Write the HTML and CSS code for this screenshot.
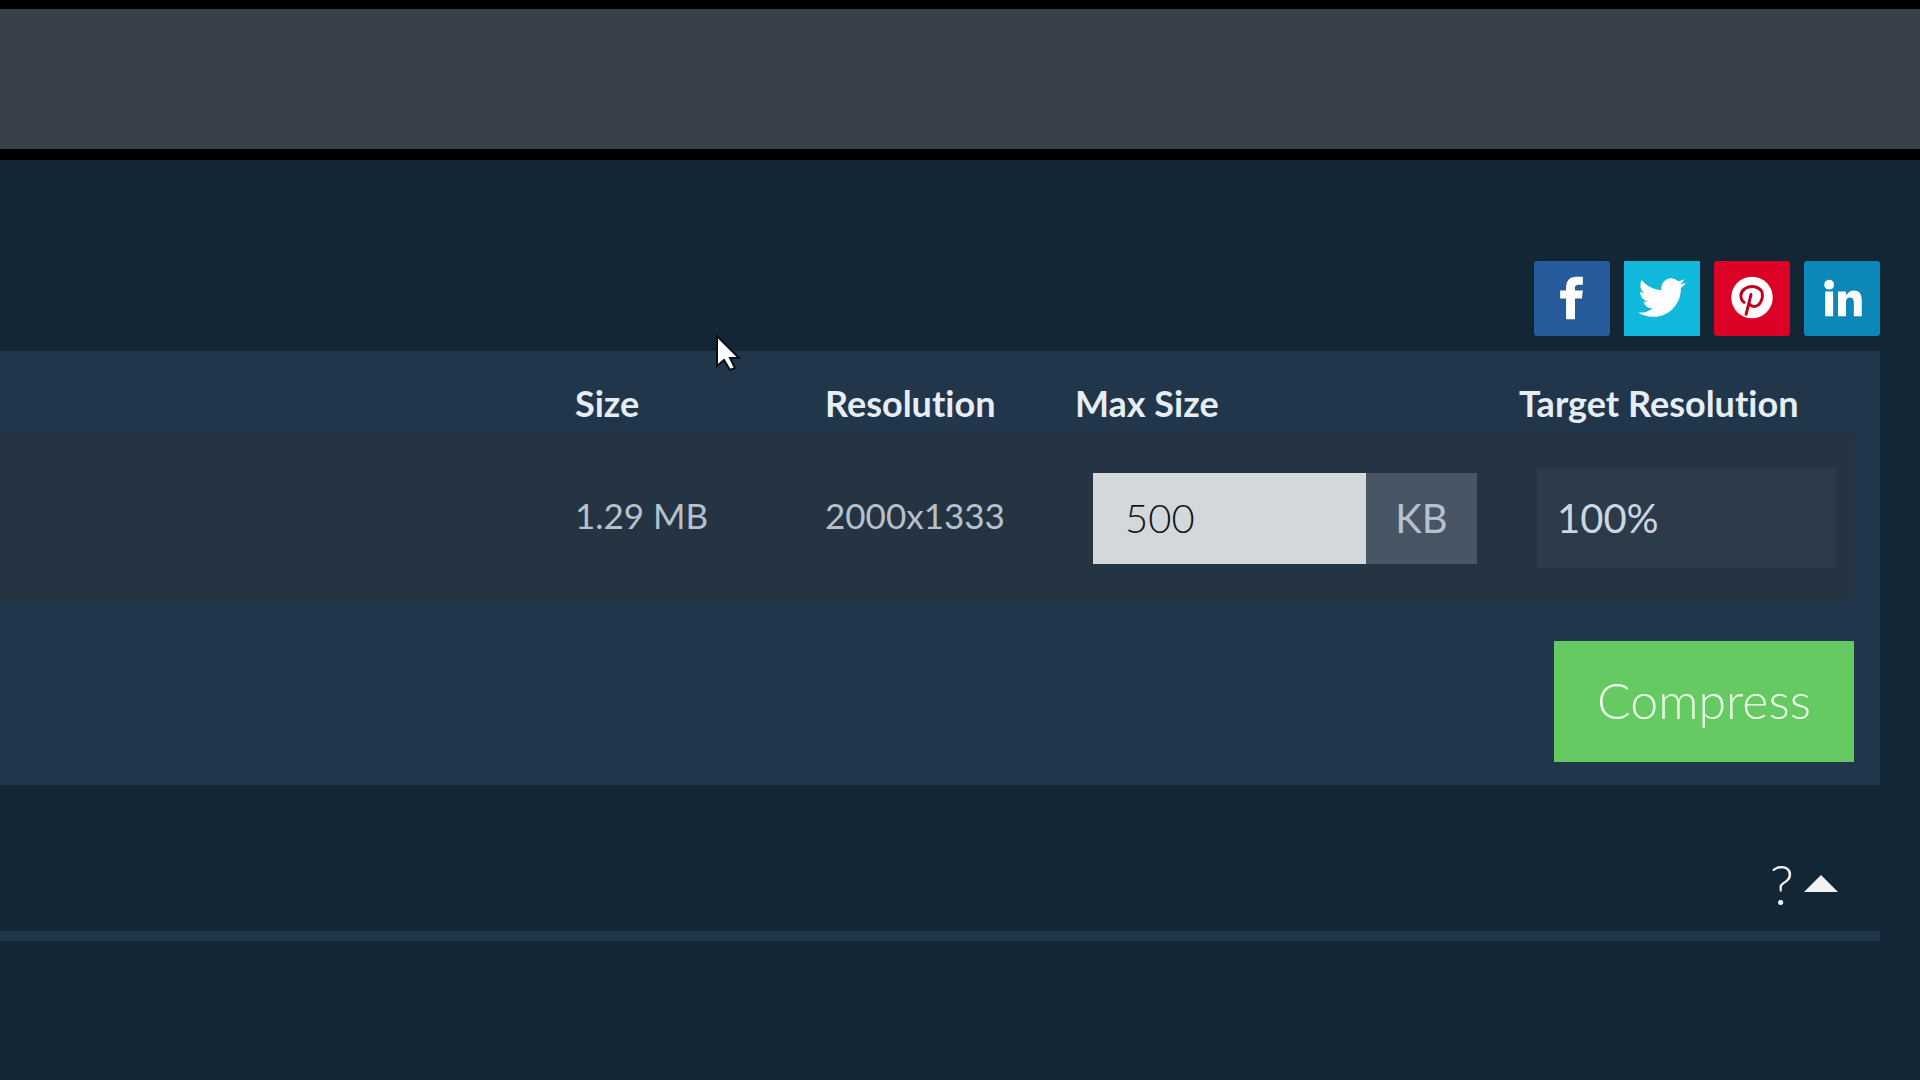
FILE: index.html
```html
<!DOCTYPE html>
<html lang="en">
<head>
<meta charset="utf-8">
<meta name="viewport" content="width=device-width, initial-scale=1">
<title>Compress</title>
<link rel="stylesheet" href="styles.css">
</head>
<body>
<header class="banner"></header>
<main class="content">
  <nav class="share" aria-label="Share">
    <a class="share-link facebook" href="#" aria-label="Facebook">
      <svg viewBox="0 0 76 76"><path d="M32 59V38h-6v-8h6v-3c0-7 4-11 10-11h7v8h-4c-3 0-4 1-4 3v3h8l-1 8h-7v21z"/></svg>
    </a>
    <a class="share-link twitter" href="#" aria-label="Twitter">
      <svg viewBox="0 0 76 76"><path transform="translate(14 13) scale(2)" d="M23.95 4.57a10 10 0 0 1-2.82.77 4.96 4.96 0 0 0 2.16-2.72c-.95.55-2 .95-3.13 1.18a4.92 4.92 0 0 0-8.38 4.48C7.69 8.1 4.07 6.13 1.64 3.16a4.92 4.92 0 0 0 1.52 6.57 4.9 4.9 0 0 1-2.23-.61v.06c0 2.39 1.7 4.38 3.95 4.83a5 5 0 0 1-2.21.09 4.94 4.94 0 0 0 4.6 3.42A9.87 9.87 0 0 1 0 19.54a14 14 0 0 0 7.55 2.21c9.05 0 14-7.5 14-13.98 0-.21 0-.42-.02-.63a9.94 9.94 0 0 0 2.46-2.55z"/></svg>
    </a>
    <a class="share-link pinterest" href="#" aria-label="Pinterest">
      <svg viewBox="0 0 76 76"><circle cx="38" cy="37" r="21"/><path class="pin" d="M30 42c-5-4-4-11 1-14 6-4 14-2 17 3 2 7-2 15-8 15-3 0-4-1-5-3M37 34l-5 20"/></svg>
    </a>
    <a class="share-link linkedin" href="#" aria-label="LinkedIn">
      <svg viewBox="0 0 76 76"><circle cx="25" cy="24" r="5"/><path d="M21 31h8v25h-8zM34 31h8v4c2-3 5-5 8-5 6 0 8 4 8 10v16h-8V42c0-3-1-5-4-5s-4 2-4 5v14h-8z"/></svg>
    </a>
  </nav>
  <form class="panel">
    <table class="files">
      <thead>
        <tr>
          <th class="col-file"></th>
          <th class="col-size" scope="col">Size</th>
          <th class="col-size" scope="col">Resolution</th>
          <th class="col-max" scope="col" id="max-label">Max Size</th>
          <th class="col-target" scope="col" id="target-label">Target Resolution</th>
        </tr>
      </thead>
      <tbody>
        <tr>
          <td></td>
          <td>1.29 MB</td>
          <td>2000x1333</td>
          <td class="cell-max">
            <div class="size-field">
              <input class="size-input" type="text" value="500" aria-labelledby="max-label">
              <span class="size-unit">KB</span>
            </div>
          </td>
          <td class="cell-target">
            <select class="target-select" aria-labelledby="target-label"><option>100%</option></select>
          </td>
        </tr>
      </tbody>
    </table>
    <div class="actions"><button class="compress" type="button">Compress</button></div>
  </form>
  <section class="help">
    <button class="help-toggle" type="button" aria-label="Help">?<svg class="caret" viewBox="0 0 34 17"><path d="M17 0L34 17H0z"/></svg></button>
  </section>
</main>
<svg class="cursor" viewBox="0 0 26 38" aria-hidden="true"><path d="M2 2v30l7-6 6 10 5-2-5-10h9z"/></svg>
</body>
</html>
```
FILE: styles.css
```css
* { box-sizing: border-box; }
body {
  margin: 0;
  min-height: 100vh;
  background: #132635;
  color: #e6edf5;
  font-family: Lato, "Liberation Sans", sans-serif;
  font-size: 36px;
  font-variant-ligatures: none;
}
input, select, button { font: inherit; border: 0; border-radius: 0; margin: 0; }
.banner {
  height: 160px;
  background: #384149;
  border-top: 9px solid #000;
  border-bottom: 11px solid #000;
}
.content { padding: 101px 40px 0 0; }
.share { display: flex; justify-content: flex-end; gap: 14px; }
.share-link { width: 76px; height: 75px; border-radius: 3px; }
.share-link svg { display: block; width: 100%; height: 100%; fill: #fff; }
.facebook { background: #265c9b; }
.twitter { background: #10b8dc; border-radius: 0; }
.pinterest { background: #dc0226; }
.linkedin { background: #0c87b8; }
.share-link .pin { fill: none; stroke: #c00222; stroke-width: 3; stroke-linecap: round; }
.panel {
  margin-top: 15px;
  padding: 20px 26px 23px 0;
  background: #21364b;
}
.files { width: 100%; border-collapse: collapse; table-layout: fixed; }
.files th, .files td { padding: 0; text-align: left; white-space: nowrap; }
.files th { height: 63px; font-weight: 700; line-height: 44px; }
.files td { height: 168px; color: #b7c1cc; padding-bottom: 6px; font-size: 35px; }
.files tbody tr { background: #243442; }
.col-size { width: 250px; }
.col-max { width: 444px; }
.col-target { width: 335px; }
.files .cell-max { padding: 0 0 0 18px; }
.files .cell-target { padding: 0 18px; }
.size-field { display: flex; width: 384px; height: 91px; }
.size-input {
  flex: 1;
  min-width: 0;
  padding: 0 32px;
  background: #d4d8db;
  color: #10181e;
  font-size: 40px;
  font-weight: 300;
}
.size-unit {
  width: 111px;
  background: #475564;
  font-size: 40px;
  line-height: 91px;
  text-align: center;
}
.target-select {
  display: block;
  width: 100%;
  height: 100px;
  padding: 0 20px;
  appearance: none;
  background: #2b3b49;
  color: #ccd6e0;
  font-size: 40px;
}
.actions { display: flex; justify-content: flex-end; padding-top: 39px; }
.compress {
  width: 300px;
  height: 121px;
  padding: 0 0 4px;
  background: #65ca62;
  color: #ecffe9;
  font-size: 50px;
  font-weight: 300;
}
.help {
  display: flex;
  justify-content: flex-end;
  height: 156px;
  padding: 66px 42px 0 0;
  border-bottom: 10px solid #21364b;
}
.help-toggle {
  display: flex;
  align-items: center;
  gap: 10px;
  height: 64px;
  padding: 0;
  background: none;
  color: #f2f2f2;
  font-size: 56px;
  font-weight: 300;
}
.caret { width: 34px; height: 17px; fill: #f2f2f2; }
.cursor {
  position: absolute;
  left: 715px;
  top: 334px;
  width: 26px;
  height: 38px;
  fill: #fff;
  stroke: #07101a;
  stroke-width: 2;
}
```
